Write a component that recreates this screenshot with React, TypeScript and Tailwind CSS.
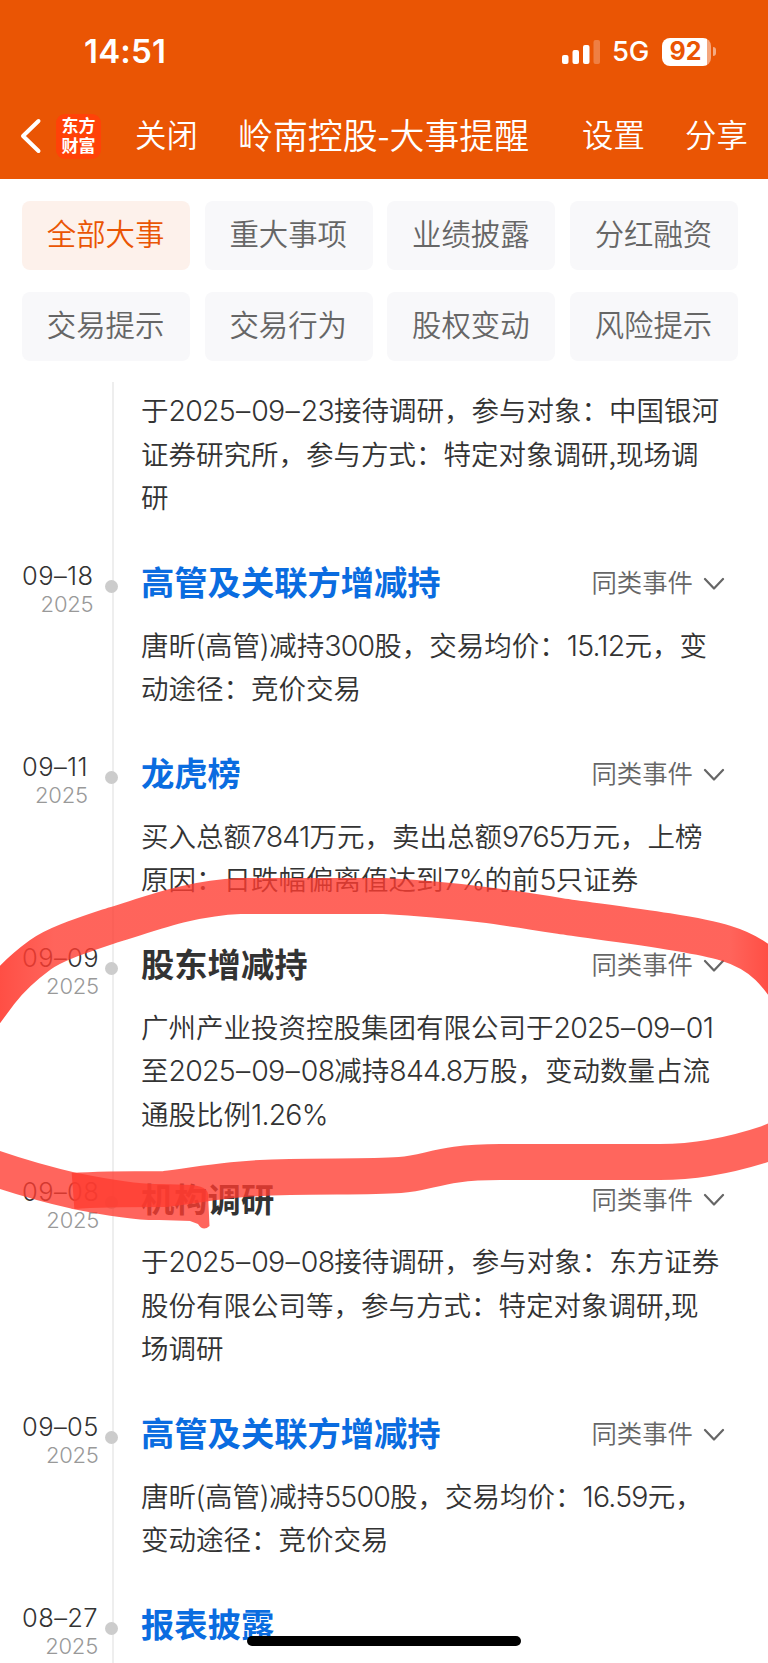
import clsx from "clsx";

type Event = {
  date: string;
  year: string;
  title: string;
  link?: boolean;
  lines: string[];
};

const filters = [
  "全部大事",
  "重大事项",
  "业绩披露",
  "分红融资",
  "交易提示",
  "交易行为",
  "股权变动",
  "风险提示",
];

const events: Event[] = [
  {
    date: "09–18",
    year: "2025",
    title: "高管及关联方增减持",
    link: true,
    lines: ["唐昕(高管)减持300股，交易均价：15.12元，变", "动途径：竞价交易"],
  },
  {
    date: "09–11",
    year: "2025",
    title: "龙虎榜",
    link: true,
    lines: ["买入总额7841万元，卖出总额9765万元，上榜", "原因：日跌幅偏离值达到7%的前5只证券"],
  },
  {
    date: "09–09",
    year: "2025",
    title: "股东增减持",
    lines: [
      "广州产业投资控股集团有限公司于2025–09–01",
      "至2025–09–08减持844.8万股，变动数量占流",
      "通股比例1.26%",
    ],
  },
  {
    date: "09–08",
    year: "2025",
    title: "机构调研",
    lines: [
      "于2025–09–08接待调研，参与对象：东方证券",
      "股份有限公司等，参与方式：特定对象调研,现",
      "场调研",
    ],
  },
  {
    date: "09–05",
    year: "2025",
    title: "高管及关联方增减持",
    link: true,
    lines: ["唐昕(高管)减持5500股，交易均价：16.59元，", "变动途径：竞价交易"],
  },
  {
    date: "08–27",
    year: "2025",
    title: "报表披露",
    link: true,
    lines: [],
  },
];

function StatusBar() {
  return (
    <div className="flex h-[93px] items-center justify-between pt-[10px] pr-[52px] pl-[84px] font-['Inter',sans-serif]">
      <span className="text-[33px] leading-none font-semibold tracking-[0.2px]">14:51</span>
      <div className="flex items-center">
        <svg width="40" height="26" viewBox="0 0 40 26" fill="white">
          <rect x="0" y="16" width="6.5" height="9" rx="2" />
          <rect x="10.5" y="11" width="6.5" height="14" rx="2" />
          <rect x="21" y="6" width="6.5" height="19" rx="2" />
          <rect x="31.5" y="1" width="6.5" height="24" rx="2" opacity="0.25" />
        </svg>
        <span className="ml-[10px] w-[39px] text-[27.5px] leading-none font-medium tracking-[-0.3px]">5G</span>
        <div className="ml-[11px] flex items-center">
          <div className="flex h-[28px] w-[49px] items-center justify-center overflow-hidden rounded-[8px] bg-[linear-gradient(to_right,#fff_45px,#f5a67c_45px)] pr-[2px] text-[25px] leading-none font-bold text-[#ea5504]">
            92
          </div>
          <div className="ml-[2px] h-[9px] w-[3px] rounded-r-full bg-white/50" />
        </div>
      </div>
    </div>
  );
}

function NavBar() {
  return (
    <div className="flex h-[86px] items-center text-[31.4px] leading-none font-[350] whitespace-nowrap">
      <svg className="ml-[20px]" width="22" height="36" viewBox="0 0 22 36" fill="none" stroke="white" strokeWidth="4" strokeLinecap="round" strokeLinejoin="round">
        <path d="M18.5 3 L3 18 L18.5 33" />
      </svg>
      <div className="ml-[14px] flex h-[45px] w-[45px] items-center justify-center rounded-[9px] bg-[#ff4208] pb-[2px] text-center text-[17px] leading-[20px] font-bold">
        <span>
          东方
          <br />
          财富
        </span>
      </div>
      <span className="ml-[34px] w-[62px] pb-[4px]">关闭</span>
      <span className="ml-[41px] w-[290px] pb-[4px] text-[34.9px]">岭南控股-大事提醒</span>
      <span className="ml-[54px] w-[62px] pb-[4px]">设置</span>
      <span className="ml-[41px] w-[62px] pb-[4px]">分享</span>
    </div>
  );
}

// digits and dashes are set in a wider face than the Chinese text round them
function MixedLine({ text }: { text: string }) {
  return (
    <div className="h-[43.5px]">
      {text.split(/([0-9.%]+|–)/).map((part, i) =>
        i % 2 ? (
          <span
            key={i}
            className={clsx(
              "font-['Inter',sans-serif] text-[28.5px] leading-none font-light",
              part === "–" ? "px-[1.1px]" : "tracking-[-0.8px]"
            )}
          >
            {part}
          </span>
        ) : (
          part
        )
      )}
    </div>
  );
}

function Description({ lines }: { lines: string[] }) {
  return (
    <div className="-mt-[1.5px] mb-[1.5px] text-[27.5px] leading-[43.5px] font-[350] whitespace-nowrap text-[#333]">
      {lines.map((line) => (
        <MixedLine key={line} text={line} />
      ))}
    </div>
  );
}

function EventItem({ event }: { event: Event }) {
  return (
    <div className="flex">
      <div className="w-[105px] shrink-0 pt-[4px] pl-[22px] font-['Inter',sans-serif] font-light">
        <div className="w-fit text-right">
          <div className="text-[25.5px] leading-[28px] tracking-[0.4px] text-[#333]">{event.date}</div>
          <div className="text-[22px] leading-[29px] tracking-[-0.2px] text-[#999]">{event.year}</div>
        </div>
      </div>
      <div className="relative z-10 mt-[22px] h-[13px] w-[13px] shrink-0 rounded-full bg-[#ccc]" />
      <div className="ml-[23px] flex-1 pb-[37.75px]">
        <div className="flex h-[50px] items-center justify-between pr-[43px] whitespace-nowrap">
          <h2
            className={clsx(
              "pb-[4px] text-[33.3px] leading-none font-bold",
              event.link ? "text-[#0a6ce0]" : "text-[#333]"
            )}
          >
            {event.title}
          </h2>
          {event.lines.length > 0 && (
            <div className="flex items-center gap-[10px] text-[25.4px] leading-none font-[350] text-[#666]">
              <span className="pb-[2px]">同类事件</span>
              <svg width="22" height="14" viewBox="0 0 22 14" fill="none" stroke="#666" strokeWidth="2.2" strokeLinecap="round" strokeLinejoin="round">
                <path d="M2 3 L11 12.5 L20 3" />
              </svg>
            </div>
          )}
        </div>
        <div className="pt-[16.25px]">
          <Description lines={event.lines} />
        </div>
      </div>
    </div>
  );
}

// hand-drawn marker circle
function Marker() {
  return (
    <svg className="pointer-events-none absolute inset-0 z-20" width="768" height="1663" viewBox="0 0 768 1663" fill="none" stroke="#ff3b30" strokeWidth="36" strokeLinejoin="round">
      <defs>
        <linearGradient id="edge" gradientUnits="userSpaceOnUse" x1="0" y1="0" x2="768" y2="0">
          <stop offset="0" stopColor="#ff3b30" stopOpacity="0.9" />
          <stop offset="0.07" stopColor="#ff3b30" stopOpacity="0.79" />
          <stop offset="0.95" stopColor="#ff3b30" stopOpacity="0.79" />
          <stop offset="1" stopColor="#ff3b30" stopOpacity="0.9" />
        </linearGradient>
      </defs>
      <g opacity="0.78">
        <path d="M73 1191 C100 1189 135 1189 165 1189 C195 1186 225 1178 290 1177 C330 1176 370 1177 400 1175 C430 1173 440 1162 500 1162 L660 1162 C700 1162 735 1154 768 1143 L800 1130" />
      </g>
      <path
        stroke="url(#edge)"
        d="M800 1010 C780 980 768 956 725 943 C690 932 600 922 560 916 C510 908 460 900 384 896 L240 896 C190 898 150 914 113 925 C80 936 55 944 40 955 C25 966 10 980 0 993 L-20 1020"
      />
      <g opacity="0.78">
        <path d="M-20 1163 C10 1174 40 1183 75 1191 C110 1198 140 1203 160 1202 L192 1203" />
        <path d="M190 1185 Q207 1186 208 1194 L209.500 1226 Q203 1232 198 1224 L190 1221 Z" fill="#ff3b30" stroke="none" />
      </g>
    </svg>
  );
}

export default function App() {
  return (
    <div className="relative h-[1663px] w-[768px] overflow-hidden bg-white font-['Noto_Sans_CJK_SC',sans-serif]">
      <header className="h-[179px] bg-[#ea5504] text-white">
        <StatusBar />
        <NavBar />
      </header>

      <div className="grid grid-cols-4 gap-x-[14.5px] gap-y-[22px] pt-[22px] pr-[30px] pl-[22px]">
        {filters.map((name, i) => (
          <button
            key={name}
            className={clsx(
              "h-[69px] rounded-[8px] pr-[1px] pb-[5px] text-[29.4px] leading-none font-[350] whitespace-nowrap",
              i === 0 ? "bg-[#fdf1eb] text-[#ea5504]" : "bg-[#f8f8fa] text-[#666]"
            )}
          >
            {name}
          </button>
        ))}
      </div>

      <main className="relative mt-[21px] pt-[7.5px]">
        <div className="absolute inset-y-0 left-[112px] w-[2px] bg-[#eee]" />
        <div className="pb-[37.75px] pl-[141px]">
          <Description lines={["于2025–09–23接待调研，参与对象：中国银河", "证券研究所，参与方式：特定对象调研,现场调", "研"]} />
        </div>
        {events.map((event) => (
          <EventItem key={event.date} event={event} />
        ))}
      </main>

      <Marker />
      <div className="absolute bottom-[17px] left-[247px] z-30 h-[10px] w-[274px] rounded-full bg-black" />
    </div>
  );
}
